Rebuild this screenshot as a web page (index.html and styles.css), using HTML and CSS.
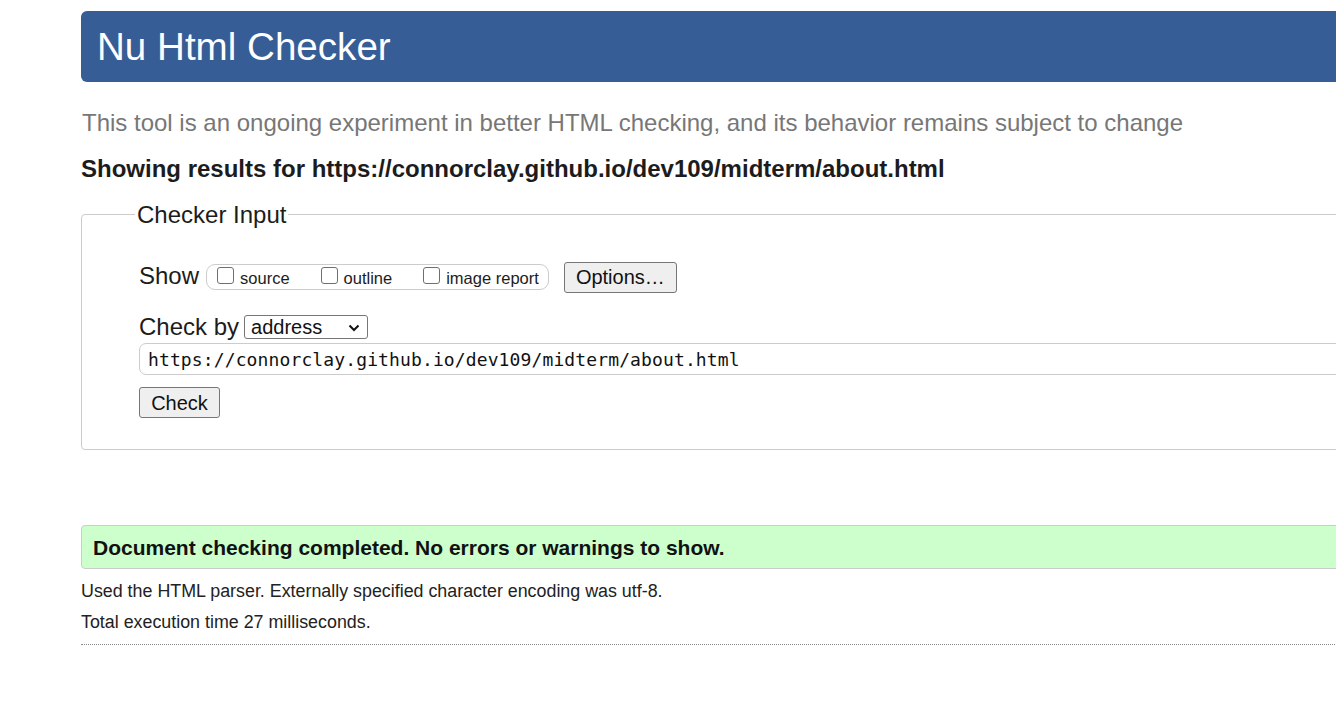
FILE: index.html
```html
<!DOCTYPE html>
<html lang="en">
<head>
<meta charset="utf-8">
<title>Showing results for https://connorclay.github.io/dev109/midterm/about.html - Nu Html Checker</title>
<link rel="stylesheet" href="styles.css">
</head>
<body>
<div class="page">
  <h1 class="banner">Nu Html Checker</h1>
  <p class="lede">This tool is an ongoing experiment in better HTML checking, and its behavior remains subject to change</p>
  <p class="results-for">Showing results for https://connorclay.github.io/dev109/midterm/about.html</p>
  <form class="checker">
    <fieldset class="checker-input">
      <legend class="legend">Checker Input</legend>
      <div class="show-row">
        <span class="row-label">Show</span>
        <span class="show-group">
          <label class="opt"><input class="cb" type="checkbox"><span>source</span></label>
          <label class="opt"><input class="cb" type="checkbox"><span>outline</span></label>
          <label class="opt"><input class="cb" type="checkbox"><span>image report</span></label>
        </span>
        <button type="button" class="btn btn-options">Options…</button>
      </div>
      <div class="checkby-row">
        <span class="row-label">Check by</span>
        <span class="select-wrap">
          <select class="select"><option>address</option></select>
          <svg class="chev" width="12" height="8" viewBox="0 0 12 8"><polyline points="1.5,1.5 6,6 10.5,1.5" fill="none" stroke="#111" stroke-width="2"/></svg>
        </span>
      </div>
      <input class="url" type="text" value="https://connorclay.github.io/dev109/midterm/about.html">
      <button type="button" class="btn btn-check">Check</button>
    </fieldset>
  </form>
  <div class="success">
    <p class="success-text">Document checking completed. No errors or warnings to show.</p>
  </div>
  <p class="details">Used the HTML parser. Externally specified character encoding was utf-8.</p>
  <p class="details">Total execution time 27 milliseconds.</p>
  <hr class="end">
</div>
</body>
</html>
```
FILE: styles.css
```css
html, body {
  margin: 0;
  padding: 0;
  overflow: hidden;
  background: #fff;
}
body {
  font-family: "Liberation Sans", Arial, sans-serif;
  color: #111;
  line-height: 1.2;
}
.page {
  margin-left: 81px;
  width: 1400px;
  padding-top: 11px;
}
.banner {
  margin: 0;
  height: 71px;
  line-height: 71px;
  padding-left: 16px;
  background: #365d95;
  color: #fff;
  font-size: 38.6px;
  font-weight: normal;
  border-radius: 6px 0 0 6px;
}
.lede {
  margin: 27px 0 0;
  padding-left: 1px;
  font-size: 24px;
  color: #777;
}
.results-for {
  margin: 17px 0 0;
  font-size: 24px;
  font-weight: bold;
  color: #1c1c1c;
}
.checker {
  margin: 0;
}
.checker-input {
  margin: 17px 0 0;
  padding: 0 0 31px 57px;
  border: 1px solid #ccc;
  border-radius: 4px;
  min-inline-size: 0;
}
.legend {
  font-size: 24px;
  padding: 0 2px;
  margin-left: -4px;
  color: #1c1c1c;
}
.row-label {
  font-size: 24px;
  color: #1c1c1c;
}
.show-row {
  display: flex;
  align-items: center;
  height: 30px;
  margin-top: 33px;
}
.show-row .row-label {
  margin-bottom: 3px;
}
.show-group {
  display: inline-flex;
  align-items: center;
  height: 24px;
  margin-left: 7px;
  padding: 0 9px 0 10px;
  border: 1px solid #ccc;
  border-radius: 9px;
}
.opt {
  display: inline-flex;
  align-items: center;
  font-size: 16.5px;
  color: #1c1c1c;
}
.opt + .opt {
  margin-left: 31px;
}
.opt span {
  margin-left: 6px;
  margin-top: 3px;
}
.cb {
  appearance: none;
  -webkit-appearance: none;
  box-sizing: border-box;
  flex: none;
  width: 17px;
  height: 17px;
  margin: -4px 0 0;
  border: 1px solid #6f6f6f;
  border-radius: 3px;
  background: #fff;
}
.btn {
  font-family: "Liberation Sans", Arial, sans-serif;
  font-size: 20px;
  color: #111;
  background: #efefef;
  border: 1px solid #767676;
  border-radius: 3px;
  padding: 0;
  line-height: 1.2;
}
.btn-options {
  margin-left: 15px;
  width: 113px;
  height: 31px;
}
.checkby-row {
  display: flex;
  align-items: center;
  height: 24px;
  margin-top: 23px;
}
.select-wrap {
  position: relative;
  display: inline-block;
  margin-left: 5px;
  height: 24px;
}
.select {
  appearance: none;
  -webkit-appearance: none;
  width: 124px;
  height: 24px;
  padding: 0 0 0 6px;
  font-family: "Liberation Sans", Arial, sans-serif;
  font-size: 20px;
  color: #111;
  background: #fff;
  border: 1px solid #767676;
  border-radius: 3px;
  line-height: 22px;
}
.chev {
  position: absolute;
  right: 8px;
  top: 9px;
  pointer-events: none;
}
.url {
  display: block;
  box-sizing: border-box;
  width: 1300px;
  height: 32px;
  margin: 4px 0 0;
  padding: 0 0 0 8px;
  border: 1px solid #ccc;
  border-radius: 7px;
  font-family: "DejaVu Sans Mono", "Liberation Mono", monospace;
  font-size: 18px;
  letter-spacing: 0.12px;
  color: #111;
  background: #fff;
}
.btn-check {
  display: block;
  margin-top: 12px;
  width: 81px;
  height: 31px;
}
.success {
  margin-top: 75px;
  height: 42px;
  display: flex;
  align-items: center;
  padding-left: 11px;
  background: #ccffcc;
  border: 1px solid #ccc;
  border-radius: 4px;
}
.success-text {
  margin: 0;
  font-size: 21px;
  font-weight: bold;
  color: #111;
}
.details {
  margin: 0;
  font-size: 17.85px;
  color: #222;
}
.success + .details {
  margin-top: 12px;
}
.details + .details {
  margin-top: 9px;
}
.end {
  margin: 11px 0 0;
  height: 0;
  border: 0;
  border-top: 1px dotted #888;
}
```
